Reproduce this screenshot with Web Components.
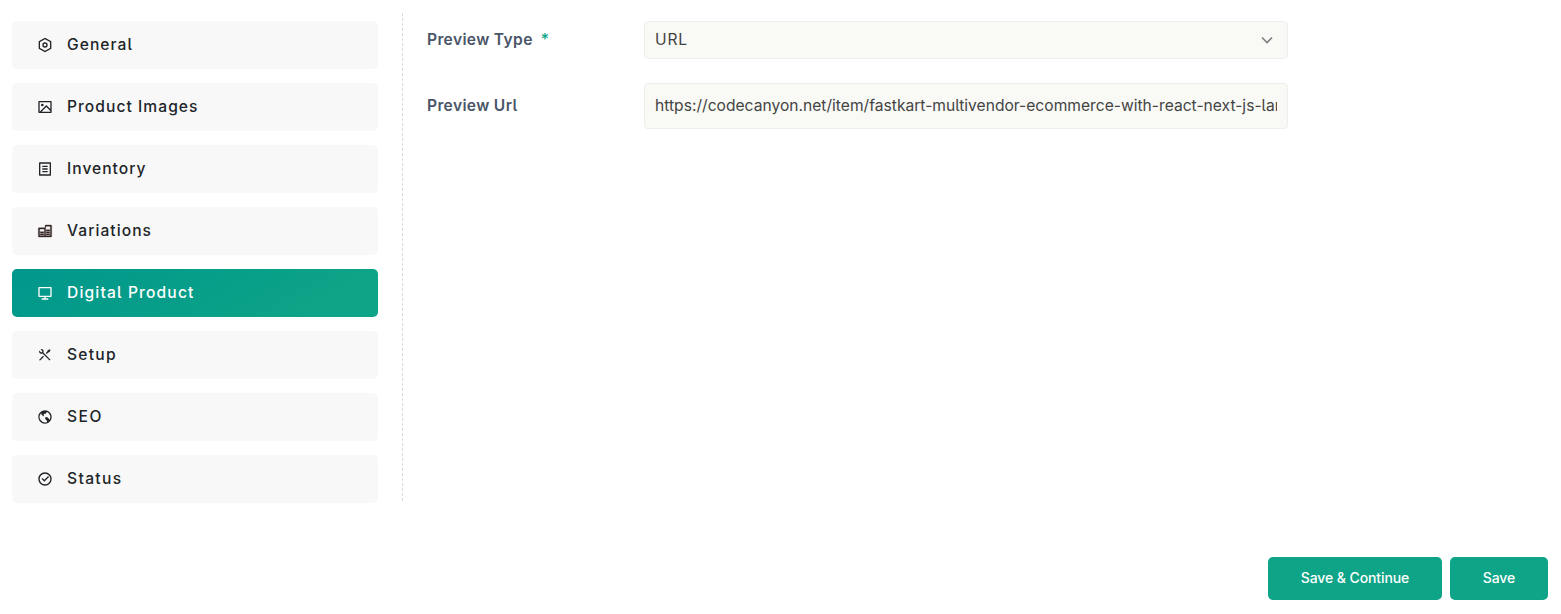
<!DOCTYPE html>
<html lang="en">
<head>
<meta charset="utf-8">
<title>Edit product</title>
<style>
html,body{margin:0;background:#fff}
body{font-family:Inter,"Liberation Sans",sans-serif;font-feature-settings:"cv05" 1;height:614px;overflow:hidden}
</style>
</head>
<body>
<product-editor>
  <tab-list slot="tabs">
    <tab-item icon="settings" style="--ls:1.05px">General</tab-item>
    <tab-item icon="image" style="--ls:1.05px">Product Images</tab-item>
    <tab-item icon="list" style="--ls:1px">Inventory</tab-item>
    <tab-item icon="building" style="--ls:1.05px">Variations</tab-item>
    <tab-item icon="computer" active style="--ls:1.16px">Digital Product</tab-item>
    <tab-item icon="tools" style="--ls:1.25px">Setup</tab-item>
    <tab-item icon="earth" style="--ls:1.5px">SEO</tab-item>
    <tab-item icon="check" style="--ls:1.35px">Status</tab-item>
  </tab-list>
  <form-row label="Preview Type" required><select-box>URL</select-box></form-row>
  <form-row label="Preview Url"><text-box>https://codecanyon.net/item/fastkart-multivendor-ecommerce-with-react-next-js-lar</text-box></form-row>
  <action-button slot="actions" style="width:174px">Save &amp; Continue</action-button>
  <action-button slot="actions" style="width:98px">Save</action-button>
</product-editor>
<script>
const icons = {
  settings:'<path d="M12 1l9.5 5.5v11L12 23l-9.5-5.5v-11L12 1zm0 2.311L4.5 7.653v8.694l7.5 4.342 7.5-4.342V7.653L12 3.311zM12 16a4 4 0 1 1 0-8 4 4 0 0 1 0 8zm0-2a2 2 0 1 0 0-4 2 2 0 0 0 0 4z"/>',
  image:'<path d="M2.992 21A1 1 0 0 1 2 20.007V3.993A1 1 0 0 1 2.992 3h18.016A1 1 0 0 1 22 3.993v16.014a1 1 0 0 1-.992.993H2.992zM20 15V5H4v14L14 9l6 6zm0 2.828l-6-6L6.828 19H20v-1.172zM8 11a2 2 0 1 1 0-4 2 2 0 0 1 0 4z"/>',
  list:'<path d="M20 22H4a1 1 0 0 1-1-1V3a1 1 0 0 1 1-1h16a1 1 0 0 1 1 1v18a1 1 0 0 1-1 1zm-1-2V4H5v16h14zM8 7h8v2H8V7zm0 4h8v2H8v-2zm0 4h8v2H8v-2z"/>',
  building:'<path stroke="#4a2018" stroke-width=".5" d="M12 21H3a1 1 0 0 1-1-1V8a1 1 0 0 1 1-1h9V4a1 1 0 0 1 1-1h8a1 1 0 0 1 1 1v16a1 1 0 0 1-1 1h-9zm-1-2V9H4v10h7zm2 0h7V5h-7v14zM5 16h5v2H5v-2zm9 0h5v2h-5v-2zm0-3h5v2h-5v-2zm0-3h5v2h-5v-2zm-9 3h5v2H5v-2z"/>',
  computer:'<path d="M4 16h16V5H4v11zm9 2v2h4v2H7v-2h4v-2H2.992A.998.998 0 0 1 2 16.993V4.007C2 3.451 2.455 3 2.992 3h18.016c.548 0 .992.449.992 1.007v12.986c0 .556-.455 1.007-.992 1.007H13z"/>',
  tools:'<path d="M5.33 3.271a3.5 3.5 0 0 1 4.254 4.963l10.709 10.71-1.414 1.414-10.71-10.71a3.502 3.502 0 0 1-4.962-4.255L5.444 7.63a1.5 1.5 0 1 0 2.121-2.121L5.329 3.27zm10.367 1.884l3.182-1.768 1.414 1.414-1.768 3.182-1.768.354-2.12 2.121-1.415-1.414 2.121-2.121.354-1.768zm-6.718 8.132l1.414 1.414-5.303 5.303a1 1 0 0 1-1.492-1.327l.078-.087 5.303-5.303z"/>',
  earth:'<path d="M6.235 6.453a8 8 0 0 0 8.817 12.944c.115-.75-.137-1.47-.24-1.722-.23-.56-.988-1.517-2.253-2.844-.338-.355-.316-.628-.195-1.437l.013-.091c.082-.554.22-.882 2.085-1.178.948-.15 1.197.228 1.542.753l.116.172c.328.48.571.59.938.756.165.075.37.17.645.325.652.373.652.794.652 1.716v.105c0 .391-.038.735-.098 1.034a8.002 8.002 0 0 0-3.105-12.341c-.553.373-1.312.902-1.577 1.265-.135.185-.327 1.132-.95 1.21-.162.02-.381.006-.613-.009-.622-.04-1.472-.095-1.744.644-.173.468-.203 1.74.356 2.4.09.105.107.3.046.519-.08.287-.241.462-.292.498-.096-.056-.288-.279-.419-.43-.313-.365-.705-.82-1.211-.96-.184-.051-.386-.093-.583-.135-.549-.115-1.17-.246-1.315-.554-.106-.226-.105-.537-.105-.865 0-.417 0-.888-.204-1.345a1.276 1.276 0 0 0-.306-.43zM12 22C6.477 22 2 17.523 2 12S6.477 2 12 2s10 4.477 10 10-4.477 10-10 10z"/>',
  check:'<path d="M12 22C6.477 22 2 17.523 2 12S6.477 2 12 2s10 4.477 10 10-4.477 10-10 10zm0-2a8 8 0 1 0 0-16 8 8 0 0 0 0 16zm-.997-4L6.76 11.757l1.414-1.414 2.829 2.829 5.656-5.657 1.415 1.414L11.003 16z"/>'
};
function define(name, render) {
  customElements.define(name, class extends HTMLElement {
    constructor() { super(); this.attachShadow({mode:'open'}); }
    connectedCallback() { this.shadowRoot.innerHTML = render(this); }
  });
}
define('product-editor', () => `<style>
:host{display:flex;flex-direction:column;height:614px;box-sizing:border-box;padding:13px 13px 14px 12px;justify-content:space-between}
.main{display:flex;height:488px}
.side{width:390px;box-sizing:border-box;padding:8px 24px 0 0}
.rule{width:1px;background:repeating-linear-gradient(#d9dade 0 3px,transparent 3px 5px)}
.form{display:flex;flex-direction:column;gap:24px;padding:8px 0 0 24px}
.actions{display:flex;gap:8px;justify-content:flex-end}
</style><div class="main"><div class="side"><slot name="tabs"></slot></div><div class="rule"></div><div class="form"><slot></slot></div></div><div class="actions"><slot name="actions"></slot></div>`);
define('tab-list', () => `<style>:host{display:flex;flex-direction:column;gap:14px}</style><slot></slot>`);
define('tab-item', el => `<style>
:host{display:flex;align-items:center;height:48px;box-sizing:border-box;padding-left:25px;gap:14px;border-radius:5px;background:#f8f8f8;color:#212529;font-size:15.6px;font-weight:450;line-height:20px;letter-spacing:var(--ls)}
:host([active]){background:linear-gradient(150deg,#00968c -4%,#0da487 85%);color:#fff}
svg{width:16px;height:16px;fill:currentColor;flex:none}
span{padding-bottom:1px}
</style><svg viewBox="0 0 24 24">${icons[el.getAttribute('icon')]}</svg><span><slot></slot></span>`);
define('form-row', el => `<style>
:host{display:flex}
.label{width:217px;font-size:15.6px;font-weight:600;color:#4a5568;letter-spacing:.35px;line-height:20px;padding-top:9px}
:host(:not([required])) .label{padding-top:13px}
b{color:#0da487;font-weight:500;margin-left:8px}
</style><div class="label">${el.getAttribute('label')}${el.hasAttribute('required') ? '<b>*</b>' : ''}</div><slot></slot>`);
const field = `box-sizing:border-box;width:644px;border:1px solid #eee;border-radius:4px;background:#f9faf5;color:#444;font-size:15.6px;font-weight:400;padding:0 10px;align-items:center;`;
define('select-box', () => `<style>:host{display:flex;${field}height:38px;justify-content:space-between}span{padding-bottom:2px;letter-spacing:.8px}svg{width:12px;height:8px;margin-right:4.5px}</style><span><slot></slot></span><svg viewBox="0 0 12 8" fill="none" stroke="#808080" stroke-width="1.7"><path d="M1 1.5l5 5 5-5"/></svg>`);
define('text-box', () => `<style>:host{display:flex;${field}height:46px}span{overflow:hidden;white-space:nowrap;letter-spacing:.012px;line-height:24px;padding-bottom:1px}</style><span><slot></slot></span>`);
define('action-button', () => `<style>:host{display:flex;align-items:center;justify-content:center;box-sizing:border-box;height:43px;padding-bottom:2px;border-radius:5px;background:#0da487;color:#fff;font-size:14px;font-weight:450;letter-spacing:-.1px}</style><span><slot></slot></span>`);
</script>
</body>
</html>
